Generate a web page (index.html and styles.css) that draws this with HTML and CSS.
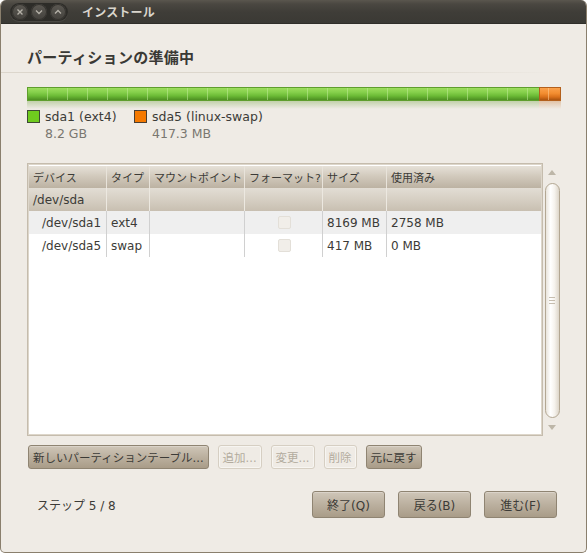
FILE: index.html
```html
<!DOCTYPE html>
<html lang="ja">
<head>
<meta charset="utf-8">
<title>インストール</title>
<link rel="stylesheet" href="styles.css">
</head>
<body>
<div class="window">
  <div class="titlebar">
    <div class="wm-buttons">
      <span class="wm-btn">
        <svg width="8" height="8" viewBox="0 0 8 8"><path d="M1.5 1.5 L6.5 6.5 M6.5 1.5 L1.5 6.5" stroke="#b5b1a8" stroke-width="1.4" fill="none"/></svg>
      </span>
      <span class="wm-btn">
        <svg width="8" height="8" viewBox="0 0 8 8"><path d="M1 2.5 L4 5.5 L7 2.5" stroke="#b5b1a8" stroke-width="1.3" fill="none"/></svg>
      </span>
      <span class="wm-btn">
        <svg width="8" height="8" viewBox="0 0 8 8"><path d="M1 5.5 L4 2.5 L7 5.5" stroke="#b5b1a8" stroke-width="1.3" fill="none"/></svg>
      </span>
    </div>
    <div class="title">インストール</div>
  </div>

  <div class="content">
    <h1 class="heading">パーティションの準備中</h1>
    <div class="separator"></div>

    <div class="partbar">
      <div class="seg seg-ext4"></div>
      <div class="seg seg-swap"></div>
    </div>
    <div class="partbar-reflect">
      <div class="ref ref-ext4"></div>
      <div class="ref ref-swap"></div>
    </div>

    <div class="legend">
      <div class="legend-item">
        <span class="swatch swatch-ext4"></span>
        <div class="legend-text">
          <div class="legend-name">sda1 (ext4)</div>
          <div class="legend-size">8.2 GB</div>
        </div>
      </div>
      <div class="legend-item">
        <span class="swatch swatch-swap"></span>
        <div class="legend-text">
          <div class="legend-name">sda5 (linux-swap)</div>
          <div class="legend-size">417.3 MB</div>
        </div>
      </div>
    </div>

    <div class="tree-area">
      <div class="tree-frame">
        <div class="tree">
          <div class="row header">
            <div class="cell c-dev">デバイス</div>
            <div class="cell c-type">タイプ</div>
            <div class="cell c-mount">マウントポイント</div>
            <div class="cell c-fmt">フォーマット?</div>
            <div class="cell c-size">サイズ</div>
            <div class="cell c-used">使用済み</div>
          </div>
          <div class="row disk">
            <div class="cell c-dev">/dev/sda</div>
            <div class="cell c-type"></div>
            <div class="cell c-mount"></div>
            <div class="cell c-fmt"></div>
            <div class="cell c-size"></div>
            <div class="cell c-used"></div>
          </div>
          <div class="row part odd">
            <div class="cell c-dev indent">/dev/sda1</div>
            <div class="cell c-type">ext4</div>
            <div class="cell c-mount"></div>
            <div class="cell c-fmt"><span class="check"></span></div>
            <div class="cell c-size">8169 MB</div>
            <div class="cell c-used">2758 MB</div>
          </div>
          <div class="row part">
            <div class="cell c-dev indent">/dev/sda5</div>
            <div class="cell c-type">swap</div>
            <div class="cell c-mount"></div>
            <div class="cell c-fmt"><span class="check"></span></div>
            <div class="cell c-size">417 MB</div>
            <div class="cell c-used">0 MB</div>
          </div>
        </div>
      </div>
      <div class="scrollbar">
        <span class="arrow up"></span>
        <div class="slider"><span class="grip"></span></div>
        <span class="arrow down"></span>
      </div>
    </div>

    <div class="actions">
      <button class="btn">新しいパーティションテーブル...</button>
      <button class="btn disabled">追加...</button>
      <button class="btn disabled">変更...</button>
      <button class="btn disabled">削除</button>
      <button class="btn">元に戻す</button>
    </div>

    <div class="footer">
      <div class="step">ステップ 5 / 8</div>
      <div class="nav">
        <button class="btn big">終了(Q)</button>
        <button class="btn big">戻る(B)</button>
        <button class="btn big">進む(F)</button>
      </div>
    </div>
  </div>
</div>
</body>
</html>
```

FILE: styles.css
```css
* { box-sizing: border-box; }

html, body {
  margin: 0;
  padding: 0;
  background: #ffffff;
}

body {
  font-family: "DejaVu Sans", "Noto Sans CJK JP", sans-serif;
  font-size: 12px;
  color: #3c3b37;
}

.window {
  width: 587px;
  height: 553px;
  background: #efebe5;
  border: 1px solid #8a7f6d;
  border-top: none;
  border-radius: 6px 6px 5px 5px;
  overflow: hidden;
  display: flex;
  flex-direction: column;
}

/* title bar */
.titlebar {
  height: 24px;
  flex: none;
  display: flex;
  align-items: center;
  padding-left: 10px;
  background: linear-gradient(#5a564e 0px, #4a4741 4px, #3f3d38 12px, #3a3934 24px);
  border-bottom: 1px solid #2f2e2a;
  margin: 0 -1px;
}

.wm-buttons {
  display: flex;
  gap: 3px;
  padding: 1px 2px;
  background: #2d2c28;
  border-radius: 10px;
  box-shadow: 0 1px 0 rgba(255,255,255,0.08);
}

.wm-btn {
  width: 16px;
  height: 16px;
  border-radius: 50%;
  background: linear-gradient(#5b5852, #44423d);
  box-shadow: inset 0 0 0 1px #35332f;
  display: flex;
  align-items: center;
  justify-content: center;
}

.title {
  margin-left: 14px;
  color: #d9d5cc;
  font-weight: bold;
  font-size: 12px;
  letter-spacing: 0.2px;
}

/* body */
.content {
  flex: 1;
  display: flex;
  flex-direction: column;
  padding: 0 26px 0 26px;
}

.heading {
  margin: 24px 0 0 0;
  font-size: 15px;
  font-weight: bold;
  color: #3a3935;
  line-height: 20px;
  letter-spacing: 0.3px;
}

.separator {
  height: 1px;
  margin: 4px -26px 0 -26px;
  width: 555px;
  background: linear-gradient(to right, #dcd6cc 70%, rgba(220,214,204,0) 100%);
}

/* partition bar */
.partbar {
  margin-top: 14px;
  height: 14px;
  width: 534px;
  display: flex;
}

.seg {
  height: 100%;
  border: 1px solid;
}

.seg-ext4 {
  width: 512px;
  border-color: #5f9e2d;
  border-right: none;
  background:
    repeating-linear-gradient(to right, transparent 0, transparent 19px, rgba(190,235,150,0.55) 19px, rgba(190,235,150,0.55) 20px),
    linear-gradient(#9ede5f 0%, #86d04c 35%, #6cbb36 65%, #4d8f22 100%);
}

.seg-swap {
  width: 22px;
  border-color: #b3601c;
  background:
    linear-gradient(to right, transparent 8px, rgba(255,200,140,0.6) 8px, rgba(255,200,140,0.6) 9px, transparent 9px),
    linear-gradient(#fba14b 0%, #f28d30 45%, #d9701a 75%, #a9530f 100%);
}

.partbar-reflect {
  height: 8px;
  width: 534px;
  display: flex;
}

.ref { height: 100%; }

.ref-ext4 {
  width: 512px;
  background: linear-gradient(rgba(110,160,60,0.35), rgba(110,160,60,0));
}

.ref-swap {
  width: 22px;
  background: linear-gradient(rgba(200,120,50,0.35), rgba(200,120,50,0));
}

/* legend */
.legend {
  margin-top: -1px;
  display: flex;
}

.legend-item {
  display: flex;
  align-items: flex-start;
  width: 107px;
}

.legend-item + .legend-item { width: auto; }

.swatch {
  width: 13px;
  height: 13px;
  margin-top: 2px;
  border: 1px solid #404040;
  flex: none;
}

.swatch-ext4 { background: #6fcb1e; border-color: #3d4a33; }
.swatch-swap { background: #f57900; border-color: #4a3f33; }

.legend-text {
  margin-left: 5px;
  line-height: 17px;
  font-size: 12.5px;
}

.legend-name { color: #3c3b37; }
.legend-size { color: #7a7770; }

/* tree view */
.tree-area {
  margin-top: 21px;
  display: flex;
  height: 273px;
}

.tree-frame {
  width: 517px;
  height: 100%;
  border: 1px solid #c5bcad;
  padding: 2px 1px 1px 1px;
  background: #ffffff;
  box-shadow: inset 0 0 0 1px #ddd6ca;
}

.tree {
  background: #ffffff;
  height: 100%;
}

.row {
  display: flex;
  height: 23px;
  align-items: stretch;
}

.cell {
  display: flex;
  align-items: center;
  padding-left: 4px;
  white-space: nowrap;
  overflow: hidden;
  border-right: 1px solid #d0d0d0;
  color: #3c3b37;
}

.c-dev { width: 78px; }
.c-type { width: 43px; }
.c-mount { width: 95px; }
.c-fmt { width: 78px; justify-content: center; padding-left: 0; }
.row.header .c-fmt { justify-content: flex-start; padding-left: 4px; }
.c-size { width: 64px; }
.c-used { flex: 1; border-right: none; }

.row.header {
  height: 22px;
  font-size: 11px;
  background: linear-gradient(#e6e1d8 0%, #d2cabd 45%, #bcb2a2 100%);
}

.row.header .cell {
  border-right-color: #e8e3da;
  color: #3c3b37;
}

.row.disk {
  background: linear-gradient(#e2ddd4 0%, #d6cfc3 50%, #c8bfb1 100%);
}

.row.disk .cell { border-right-color: #ece8e0; }

.row.part.odd { background: #efefef; }

.indent { padding-left: 13px; }

.check {
  width: 13px;
  height: 13px;
  border: 1px solid #e3dfd8;
  border-radius: 2px;
  background: #f1eee9;
  margin-left: 2px;
}

/* scrollbar */
.scrollbar {
  width: 16px;
  margin-left: 1px;
  display: flex;
  flex-direction: column;
  align-items: center;
  padding-top: 7px;
}

.arrow {
  width: 0;
  height: 0;
  border-left: 4px solid transparent;
  border-right: 4px solid transparent;
}

.arrow.up { border-bottom: 5px solid #bdb6a8; }
.arrow.down { border-top: 5px solid #bdb6a8; margin-top: 7px; }

.slider {
  margin-top: 8px;
  width: 15px;
  height: 235px;
  border: 1px solid #b3a793;
  border-radius: 8px;
  background: linear-gradient(to right, #e9e4db 0%, #ffffff 35%, #f6f3ee 65%, #ddd6ca 100%);
  display: flex;
  align-items: center;
  justify-content: center;
}

.grip {
  width: 6px;
  height: 7px;
  background: repeating-linear-gradient(#c6bdaf 0, #c6bdaf 1px, transparent 1px, transparent 3px);
}

/* buttons */
.actions {
  margin-top: 9px;
  display: flex;
}

.btn {
  font-family: "DejaVu Sans", "Noto Sans CJK JP", sans-serif;
  font-size: 11.5px;
  height: 24px;
  padding: 0 4px;
  border: 1px solid #8f8472;
  border-radius: 3px;
  background: linear-gradient(#cfc6b8 0%, #bbb09f 50%, #a99c88 100%);
  color: #3c3b37;
  box-shadow: inset 0 1px 0 rgba(255,255,255,0.25);
  white-space: nowrap;
  margin: 0;
}

.actions .btn { margin-right: 9px; }
.actions .btn:first-child { margin-left: 1px; }

.btn.disabled {
  background: #efebe5;
  border-color: #d6cfc3;
  color: #b3ab9e;
  box-shadow: inset 0 0 0 1px #f7f5f1;
}

.footer {
  margin-top: 22px;
  display: flex;
  align-items: center;
  justify-content: space-between;
  padding-left: 10px;
  padding-right: 3px;
}

.step {
  font-size: 12px;
  color: #3c3b37;
}

.nav {
  display: flex;
  gap: 13px;
}

.btn.big {
  height: 27px;
  width: 73px;
  padding: 0;
  font-size: 12px;
}
```
